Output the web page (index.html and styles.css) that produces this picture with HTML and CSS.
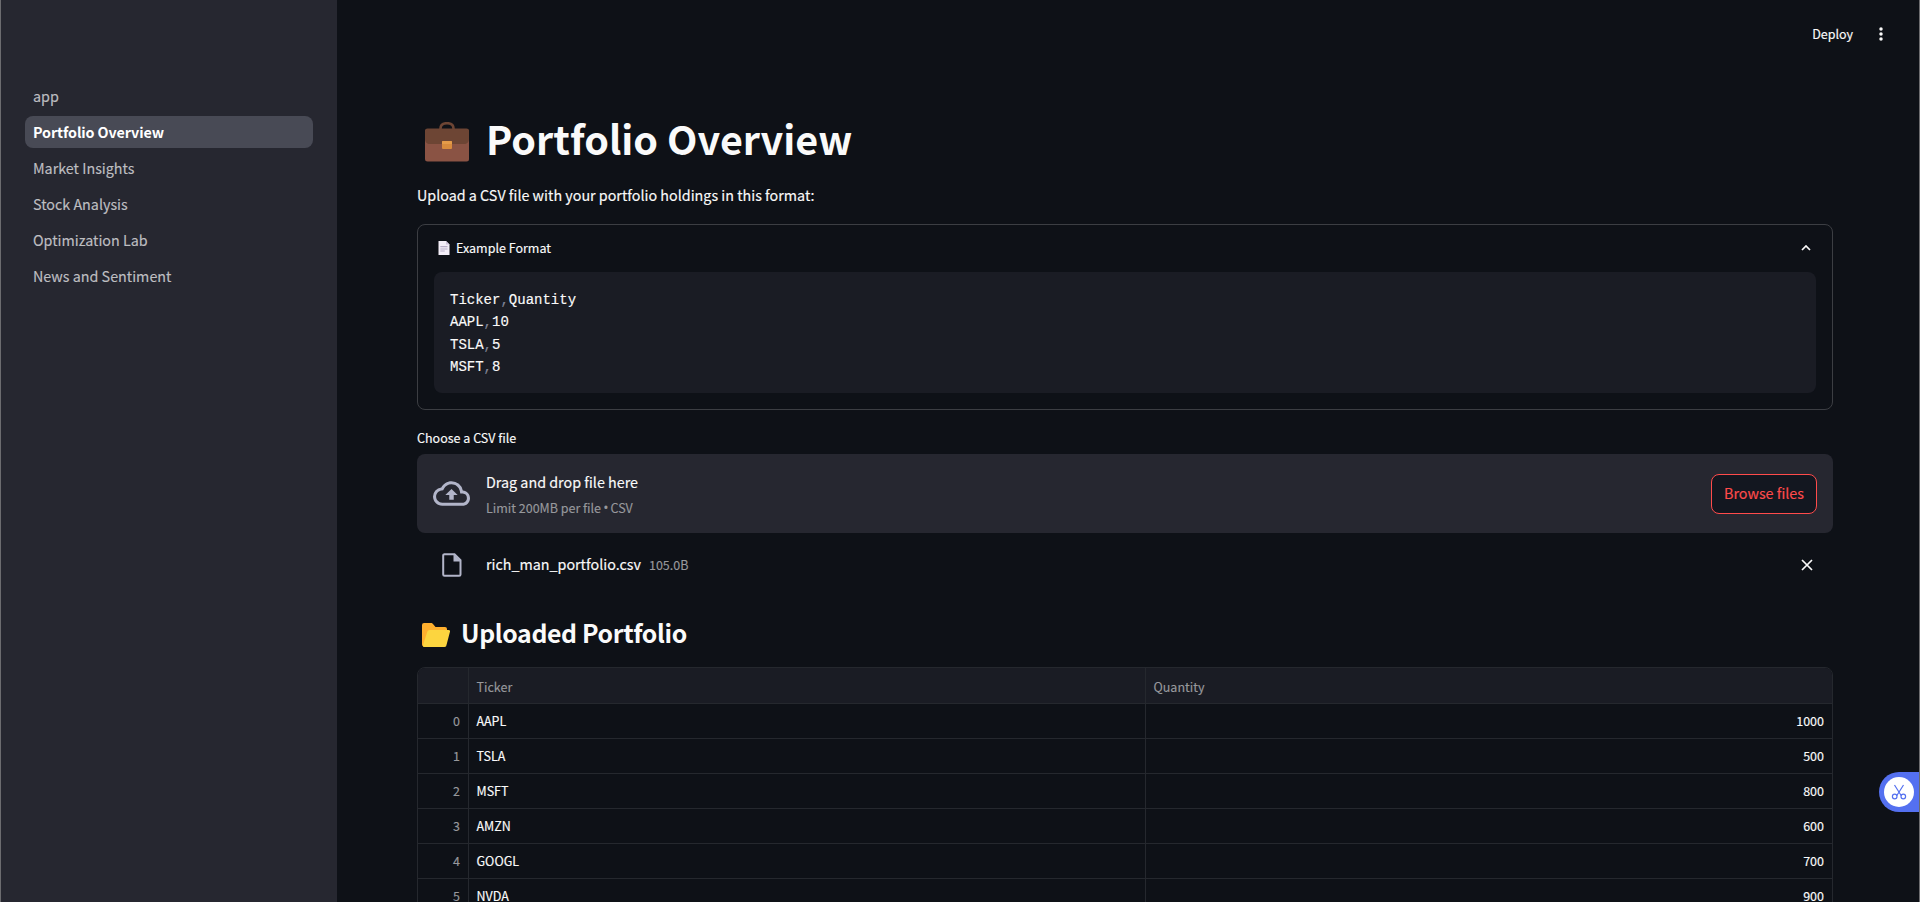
FILE: index.html
```html
<!DOCTYPE html>
<html lang="en">
<head>
<meta charset="utf-8">
<title>Portfolio Overview</title>
<link rel="stylesheet" href="styles.css">
</head>
<body>
<div class="app">
  <nav class="sidebar">
    <a class="nav-item">app</a>
    <a class="nav-item active">Portfolio Overview</a>
    <a class="nav-item">Market Insights</a>
    <a class="nav-item">Stock Analysis</a>
    <a class="nav-item">Optimization Lab</a>
    <a class="nav-item">News and Sentiment</a>
  </nav>
  <main class="main">
    <header class="toolbar">
      <span class="deploy">Deploy</span>
      <svg class="dots" viewBox="0 0 4 14"><circle cx="2" cy="2" r="1.75"/><circle cx="2" cy="7" r="1.75"/><circle cx="2" cy="12" r="1.75"/></svg>
    </header>
    <div class="content">
      <h1 class="title">
        <svg class="briefcase" viewBox="0 0 44 40"><path d="M15.500 8V6.500C15.500 3 18 1.200 22 1.200s6.500 1.800 6.500 5.300V8" fill="none" stroke="#6d4534" stroke-width="2.600"/><rect y="7" width="44" height="32.500" rx="2.500" fill="#8a5344"/><path d="M2.500 6.500h39A2.500 2.500 0 0 1 44 9v8c0 3-2 5-5 5H5c-3 0-5-2-5-5V9a2.500 2.500 0 0 1 2.500-2.500z" fill="#6d4534"/><rect x="17" y="19" width="10" height="8" rx="1" fill="#d98b3d"/><path d="M17 22V20a1 1 0 0 1 1-1h8a1 1 0 0 1 1 1v2z" fill="#e59b49"/></svg>
        <span>Portfolio Overview</span>
      </h1>
      <p class="intro">Upload a CSV file with your portfolio holdings in this format:</p>
      <section class="expander">
        <div class="summary">
          <svg class="page" viewBox="0 0 12 14"><path d="M.5 0H8l3.500 3.500V14H.5z" fill="#f3eef8"/><path d="M8 0v3.500h3.500z" fill="#cfc4dc"/><path d="M2.300 5.700h7.200M2.300 8h7.200M2.300 10h4.500" stroke="#b8aec8" stroke-width="1.200"/></svg>
          <span>Example Format</span>
          <svg class="chevron" viewBox="0 0 10 6"><path d="M1 5l4-4 4 4" fill="none" stroke="#fafafa" stroke-width="1.700"/></svg>
        </div>
        <pre class="code">Ticker<i>,</i>Quantity
AAPL<i>,</i>10
TSLA<i>,</i>5
MSFT<i>,</i>8</pre>
      </section>
      <div class="label">Choose a CSV file</div>
      <section class="dropzone">
        <svg class="cloud" viewBox="0 0 24 24"><path d="M19.350 10.040A7.490 7.490 0 0 0 12 4C9.110 4 6.600 5.640 5.350 8.040A5.994 5.994 0 0 0 0 14c0 3.310 2.690 6 6 6h13c2.760 0 5-2.240 5-5 0-2.640-2.050-4.780-4.650-4.960zM19 18H6c-2.210 0-4-1.790-4-4 0-2.050 1.530-3.760 3.560-3.970l1.070-.11.5-.95A5.469 5.469 0 0 1 12 6c2.620 0 4.880 1.860 5.390 4.430l.3 1.500 1.530.11A2.980 2.980 0 0 1 22 15c0 1.650-1.350 3-3 3zM8 13h2.550v3h2.900v-3H16l-4-4z"/></svg>
        <div class="drop-text">
          <span class="drop-title">Drag and drop file here</span>
          <span class="drop-hint">Limit 200MB per file <b>•</b> CSV</span>
        </div>
        <button class="browse">Browse files</button>
      </section>
      <div class="file">
        <svg class="file-icon" viewBox="0 0 20 24"><path d="M2 1.200h10.500l6 6V21.500a1.300 1.300 0 0 1-1.300 1.300H2.500a1.300 1.300 0 0 1-1.300-1.300V2.500A1.300 1.300 0 0 1 2.500 1.200z" fill="none" stroke="#b2b5c9" stroke-width="2"/><path d="M11.500 1v7.500H19z" fill="#b2b5c9"/></svg>
        <span class="file-name">rich_man_portfolio.csv</span>
        <span class="file-size">105.0B</span>
        <svg class="close" viewBox="0 0 12 12"><path d="M1 1l10 10M11 1L1 11" stroke="#fafafa" stroke-width="1.700"/></svg>
      </div>
      <h2 class="subtitle">
        <svg class="folder" viewBox="0 0 28 24"><path d="M2 0h7c1 0 1.500.4 2.200 1.200L13.500 4H23a2 2 0 0 1 2 2v4L4 23.500H2a2 2 0 0 1-2-2V2a2 2 0 0 1 2-2z" fill="#ffb02e"/><path d="M7.500 7H26.500a1.500 1.500 0 0 1 1.400 2L24.500 22a2 2 0 0 1-2 2H2.500C1 24 .7 23 1.100 21.800L5.400 8.600A2.200 2.200 0 0 1 7.500 7z" fill="#fcd53f"/></svg>
        <span>Uploaded Portfolio</span>
      </h2>
      <div class="table">
        <div class="row head"><span></span><span>Ticker</span><span>Quantity</span></div>
        <div class="row"><span>0</span><span>AAPL</span><span>1000</span></div>
        <div class="row"><span>1</span><span>TSLA</span><span>500</span></div>
        <div class="row"><span>2</span><span>MSFT</span><span>800</span></div>
        <div class="row"><span>3</span><span>AMZN</span><span>600</span></div>
        <div class="row"><span>4</span><span>GOOGL</span><span>700</span></div>
        <div class="row"><span>5</span><span>NVDA</span><span>900</span></div>
      </div>
    </div>
  </main>
  <div class="clip">
    <svg viewBox="0 0 30 30"><circle cx="15" cy="15" r="15" fill="#fff"/><g fill="none" stroke="#5470f0" stroke-width="1.200"><path d="M10.500 8l6.800 10.800M19.500 8l-6.800 10.800"/><circle cx="10.700" cy="19.500" r="2.300"/><circle cx="19.300" cy="19.500" r="2.300"/></g></svg>
  </div>
</div>
</body>
</html>
```
FILE: styles.css
```css
* { box-sizing: border-box; }
body {
  margin: 0;
  background: #0e1117;
  color: #fafafa;
  font-family: "Noto Sans CJK SC", "Noto Sans", sans-serif;
  font-size: 14.32px;
  line-height: 26px;
  -webkit-text-stroke: 0.15px currentColor;
  overflow: hidden;
}
svg { display: block; flex: none; }
.app {
  position: relative;
  display: flex;
  width: 1920px;
  height: 902px;
  overflow: hidden;
  border-left: 1px solid #6c6c6f;
  border-right: 1px solid #6c6c6f;
}
.sidebar {
  display: flex;
  flex-direction: column;
  gap: 4px;
  width: 336px;
  flex: none;
  padding: 80px 24px 0;
  background: #262730;
}
.nav-item {
  height: 32px;
  padding: 0 8px;
  border-radius: 8px;
  line-height: 32px;
  color: #bebec1;
}
.nav-item.active {
  background: #484a55;
  color: #fff;
  font-weight: 700;
  letter-spacing: -0.1px;
  -webkit-text-stroke: 0;
}
.main { flex: 1; }
.toolbar {
  display: flex;
  align-items: center;
  justify-content: flex-end;
  gap: 26px;
  height: 68px;
  padding-right: 36px;
  font-size: 12.5px;
}
.dots { width: 4px; height: 14px; fill: #fafafa; }
.content { width: 1416px; margin-left: 80px; }
.title {
  display: flex;
  align-items: center;
  gap: 17px;
  height: 53px;
  margin: 46px 0 0;
  padding-left: 8px;
  font-size: 39.5px;
  line-height: 53px;
  font-weight: 700;
  -webkit-text-stroke: 0;
}
.title span { padding-bottom: 6px; }
.briefcase { width: 44px; height: 40px; margin-top: 2px; }
.intro { height: 26px; margin: 15px 0 16px; }
.expander {
  height: 186px;
  padding: 0 16px;
  border: 1px solid #3c3e43;
  border-radius: 8px;
}
.summary {
  display: flex;
  align-items: center;
  height: 47px;
  padding: 0 0 2px 4px;
  font-size: 12.5px;
}
.page { width: 12px; height: 14px; margin-right: 6px; }
.chevron { width: 10px; height: 6px; margin: 0 5px 0 auto; }
.code {
  height: 121px;
  margin: 0;
  padding: 17px 16px 15px;
  border-radius: 8px;
  background: #1a1c24;
  font-family: "Liberation Mono", monospace;
  font-size: 14px;
  line-height: 22.4px;
}
.code i { font-style: normal; color: #808495; }
.label { margin-top: 16px; height: 28px; font-size: 12.5px; line-height: 24px; }
.dropzone {
  display: flex;
  align-items: center;
  height: 79px;
  padding: 0 16px;
  border-radius: 8px;
  background: #262730;
}
.cloud { width: 37px; height: 37px; margin-right: 16px; fill: #b2b5c9; }
.drop-text { display: flex; flex-direction: column; padding-top: 2px; }
.drop-hint { font-size: 12.5px; color: #97989c; }
.drop-hint b { font-family: "Open Sans", sans-serif; font-size: 14px; font-weight: 400; line-height: 1; margin: 0 -0.7px; }
.browse {
  width: 106px;
  height: 40px;
  margin-left: auto;
  padding: 0 0 2px;
  border: 1px solid #ff4b4b;
  border-radius: 8px;
  background: #131720;
  color: #ff4b4b;
  font: inherit;
}
.file {
  display: flex;
  align-items: center;
  height: 40px;
  margin-top: 12px;
  padding: 0 20px 0 24px;
}
.file-icon { width: 20px; height: 24px; margin-left: 0.5px; }
.file-name { margin-left: 24.5px; padding-bottom: 3px; }
.file-size { margin-left: 8px; padding-bottom: 1px; font-size: 12.5px; color: #97989c; }
.close { width: 12px; height: 12px; margin-left: auto; }
.subtitle {
  display: flex;
  align-items: center;
  gap: 11px;
  height: 34px;
  margin: 32px 0 16px;
  padding-left: 5px;
  font-size: 24.8px;
  line-height: 34px;
  font-weight: 600;
  letter-spacing: -0.35px;
  -webkit-text-stroke: 0;
}
.subtitle span { padding-bottom: 4px; }
.folder { width: 28px; height: 24px; margin-top: 2px; }
.table {
  border: 1px solid #25282e;
  border-radius: 8px 8px 0 0;
  overflow: hidden;
  font-size: 12.5px;
}
.row {
  display: grid;
  grid-template-columns: 51px 677px 1fr;
  height: 35px;
  line-height: 34px;
  border-bottom: 1px solid #25282e;
}
.row span { padding: 0 8px 0 7.5px; border-right: 1px solid #25282e; }
.row span:first-child { color: #97989c; text-align: right; }
.row span:last-child { border-right: 0; text-align: right; }
.row.head { height: 36px; line-height: 37px; background: #1a1c24; color: #97989c; }
.row.head span { height: 35px; }
.row.head span:last-child { text-align: left; }
.clip {
  position: absolute;
  top: 772px;
  right: 0;
  width: 40px;
  height: 40px;
  padding: 5px;
  border-radius: 20px 0 0 20px;
  background: #5470f0;
}
.clip svg { width: 30px; height: 30px; }
```
